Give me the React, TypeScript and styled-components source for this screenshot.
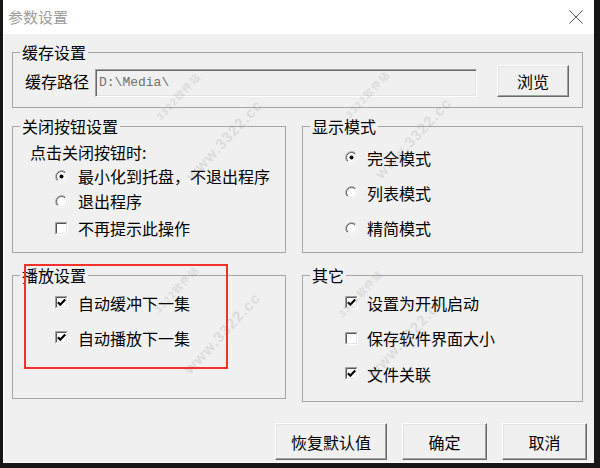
import React from "react";
import styled, { createGlobalStyle } from "styled-components";

const FONT = `"Noto Sans CJK SC", "Microsoft YaHei", sans-serif`;

const GlobalStyle = createGlobalStyle`
  html, body {
    margin: 0;
    padding: 0;
    background: #161616;
  }
  * {
    box-sizing: border-box;
  }
`;

const Frame = styled.div`
  width: 600px;
  height: 468px;
  padding: 0 6px 5px 3px;
  display: flex;
  background: #161616;
  overflow: hidden;
`;

const Window = styled.div`
  position: relative;
  flex: 1;
  min-width: 0;
  display: flex;
  flex-direction: column;
  background: #f0f0f0;
  font-family: ${FONT};
  font-size: 16px;
  color: #000;
  overflow: hidden;
`;

const TitleBar = styled.div`
  flex: none;
  height: 34px;
  display: flex;
  align-items: center;
  justify-content: space-between;
  padding: 0 11px 0 5px;
  background: #fff;
`;

const Title = styled.span`
  font-size: 15px;
  line-height: 20px;
  color: #9c9c9c;
`;

const Body = styled.div`
  flex: 1;
  min-height: 0;
  display: flex;
  flex-direction: column;
  padding: 8px 7px 0 9px;
  box-shadow: inset 1px 0 0 #fff, inset 0 -1px 0 #fff;
  overflow: hidden;
`;

const Groups = styled.div`
  display: flex;
  flex-direction: column;
  margin-right: 4px;
`;

const Columns = styled.div<{ $top: number }>`
  display: grid;
  grid-template-columns: 274px 281px;
  align-items: start;
  column-gap: 16px;
  margin-top: ${(p) => p.$top}px;
`;

const Group = styled.fieldset`
  margin: 0;
  padding: 0;
  min-width: 0;
  border: 1px solid #a6a6a6;
`;

const Legend = styled.legend`
  margin-left: 7px;
  padding: 0 2px;
  font-size: 16px;
  line-height: 20px;
`;

const PathRow = styled.div`
  display: flex;
  align-items: center;
  height: 45px;
  padding: 3px 13px 10px 12px;
`;

const PathLabel = styled.span`
  width: 64px;
  line-height: 20px;
`;

const PathInput = styled.div`
  width: 382px;
  height: 28px;
  margin: 4px 20px 0 6px;
  padding: 4px 3px;
  font-family: "Liberation Mono", monospace;
  font-size: 13px;
  line-height: 18px;
  color: #6f6f6f;
  background: #f0f0f0;
  border: 1px solid;
  border-color: #a0a0a0 #fff #fff #a0a0a0;
  box-shadow: inset 1px 1px 0 #696969, inset -1px -1px 0 #e3e3e3;
`;

const Button = styled.button<{ $w: number; $h: number }>`
  flex: none;
  width: ${(p) => p.$w}px;
  height: ${(p) => p.$h}px;
  padding: 0;
  font-family: ${FONT};
  font-size: 16px;
  color: #000;
  background: #f0f0f0;
  border: 1px solid;
  border-color: #fff #696969 #696969 #fff;
  box-shadow: inset -1px -1px 0 #a0a0a0, inset 1px 1px 0 #e3e3e3;
`;

const GroupBody = styled.div<{ $h: number; $pt: number }>`
  height: ${(p) => p.$h}px;
  padding: ${(p) => p.$pt}px 0 0 42px;
  display: flex;
  flex-direction: column;
`;

const Prompt = styled.div`
  height: 24px;
  margin-left: -25px;
  line-height: 24px;
`;

const Option = styled.div<{ $h: number; $gap?: number }>`
  display: flex;
  align-items: center;
  gap: ${(p) => p.$gap ?? 10}px;
  height: ${(p) => p.$h}px;
  line-height: 20px;
  svg {
    flex: none;
  }
`;

const ButtonRow = styled.div`
  flex: none;
  display: flex;
  justify-content: flex-end;
  gap: 15px;
  margin-top: 21px;
`;

const Marker = styled.div`
  position: absolute;
  left: 21px;
  top: 264px;
  width: 204px;
  height: 105px;
  border: 2px solid #f2302c;
  pointer-events: none;
`;

const Watermark = styled.span<{ $x: number; $y: number; $size: number }>`
  position: absolute;
  left: ${(p) => p.$x}px;
  top: ${(p) => p.$y}px;
  transform: translate(-50%, -50%) rotate(-47deg);
  font-family: "Liberation Sans", "Noto Sans CJK SC", sans-serif;
  font-size: ${(p) => p.$size}px;
  font-weight: bold;
  letter-spacing: 1px;
  white-space: nowrap;
  color: rgba(140, 140, 140, 0.22);
  pointer-events: none;
`;

function Radio({ on }: { on?: boolean }) {
  return (
    <svg width="13" height="13" viewBox="0 0 13 13">
      <circle cx="6.5" cy="6.5" r="5.5" fill="#fff" />
      <path d="M2.26 10.74A6 6 0 0 1 10.74 2.26" fill="none" stroke="#a0a0a0" />
      <path d="M2.96 10.04A5 5 0 0 1 10.04 2.96" fill="none" stroke="#555" />
      <path d="M10.74 2.26A6 6 0 0 1 2.26 10.74" fill="none" stroke="#fff" />
      <path d="M10.04 2.96A5 5 0 0 1 2.96 10.04" fill="none" stroke="#e3e3e3" />
      {on && <circle cx="6.5" cy="6.5" r="2" fill="#000" />}
    </svg>
  );
}

function Check({ on }: { on?: boolean }) {
  return (
    <svg width="13" height="13" viewBox="0 0 13 13">
      <rect x="0" y="0" width="13" height="13" fill="#fff" />
      <path d="M0.5 12.5V0.5H12.5" fill="none" stroke="#a0a0a0" />
      <path d="M1.5 11.5V1.5H11.5" fill="none" stroke="#555" />
      <path d="M12.5 0.5V12.5H0.5" fill="none" stroke="#fff" />
      <path d="M11.5 1.5V11.5H1.5" fill="none" stroke="#e3e3e3" />
      {on && (
        <path d="M2.9 6.2L5.3 8.7L10.2 3.6" fill="none" stroke="#000" strokeWidth="2.2" />
      )}
    </svg>
  );
}

function CloseIcon() {
  return (
    <svg width="14" height="14" viewBox="0 0 14 14">
      <path d="M0.5 0.5L13.5 13.5M13.5 0.5L0.5 13.5" stroke="#555" strokeWidth="1" />
    </svg>
  );
}

const marks = [
  { x: 175, y: 96 },
  { x: 364, y: 94 },
  { x: 173, y: 289 },
  { x: 357, y: 293 },
];

export default function App() {
  return (
    <>
      <GlobalStyle />
      <Frame>
        <Window>
          <TitleBar>
            <Title>参数设置</Title>
            <CloseIcon />
          </TitleBar>
          <Body>
            <Groups>
              <Group>
                <Legend>缓存设置</Legend>
                <PathRow>
                  <PathLabel>缓存路径</PathLabel>
                  <PathInput>D:\Media\</PathInput>
                  <Button $w={72} $h={32}>浏览</Button>
                </PathRow>
              </Group>

              <Columns $top={8}>
                <Group>
                  <Legend>关闭按钮设置</Legend>
                  <GroupBody $h={116} $pt={4}>
                    <Prompt>点击关闭按钮时:</Prompt>
                    <Option $h={24}>
                      <Radio on />
                      最小化到托盘，不退出程序
                    </Option>
                    <Option $h={26}>
                      <Radio />
                      退出程序
                    </Option>
                    <Option $h={28}>
                      <Check />
                      不再提示此操作
                    </Option>
                  </GroupBody>
                </Group>
                <Group>
                  <Legend>显示模式</Legend>
                  <GroupBody $h={116} $pt={4}>
                    <Option $h={35} $gap={9}>
                      <Radio on />
                      完全模式
                    </Option>
                    <Option $h={35} $gap={9}>
                      <Radio />
                      列表模式
                    </Option>
                    <Option $h={36} $gap={9}>
                      <Radio />
                      精简模式
                    </Option>
                  </GroupBody>
                </Group>
              </Columns>

              <Columns $top={12}>
                <Group>
                  <Legend>播放设置</Legend>
                  <GroupBody $h={113} $pt={0}>
                    <Option $h={35}>
                      <Check on />
                      自动缓冲下一集
                    </Option>
                    <Option $h={35}>
                      <Check on />
                      自动播放下一集
                    </Option>
                  </GroupBody>
                </Group>
                <Group>
                  <Legend>其它</Legend>
                  <GroupBody $h={116} $pt={0}>
                    <Option $h={35} $gap={9}>
                      <Check on />
                      设置为开机启动
                    </Option>
                    <Option $h={36} $gap={9}>
                      <Check />
                      保存软件界面大小
                    </Option>
                    <Option $h={35} $gap={9}>
                      <Check on />
                      文件关联
                    </Option>
                  </GroupBody>
                </Group>
              </Columns>
            </Groups>

            <ButtonRow>
              <Button $w={112} $h={37}>恢复默认值</Button>
              <Button $w={85} $h={37}>确定</Button>
              <Button $w={85} $h={37}>取消</Button>
            </ButtonRow>
          </Body>

          {marks.map((m) => (
            <React.Fragment key={`${m.x}-${m.y}`}>
              <Watermark $x={m.x} $y={m.y} $size={10}>3322软件站</Watermark>
              <Watermark $x={m.x + 46} $y={m.y + 44} $size={15}>www.3322.cc</Watermark>
            </React.Fragment>
          ))}
          <Marker />
        </Window>
      </Frame>
    </>
  );
}
